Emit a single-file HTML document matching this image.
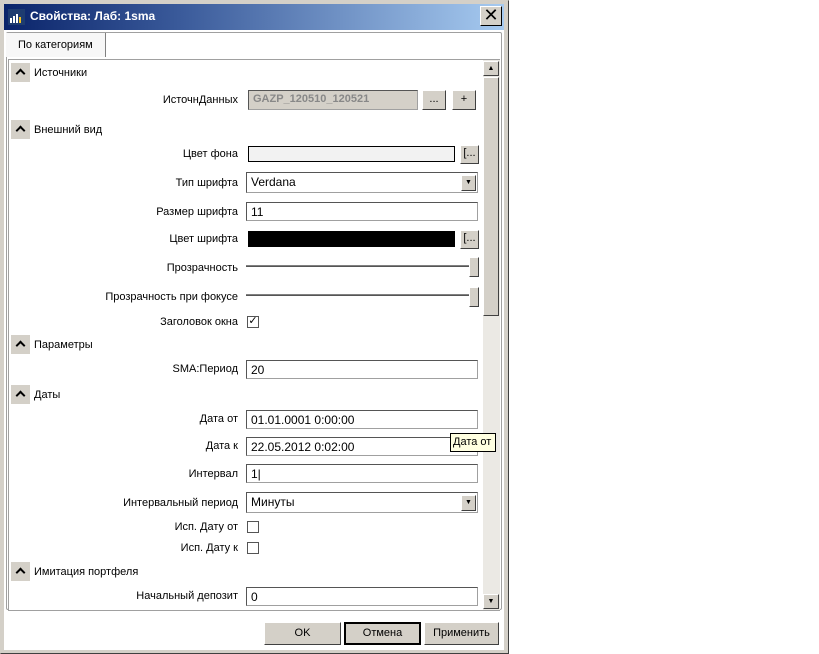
<!DOCTYPE html>
<html><head><meta charset="utf-8"><style>
*{box-sizing:border-box;margin:0;padding:0}
body{width:819px;height:654px;background:#fff;position:relative;overflow:hidden;font-family:"Liberation Sans",sans-serif;font-size:11px;color:#000}
.a{position:absolute}
.frame{left:0;top:0;width:509px;height:654px;background:#d4d0c8;border:1px solid #404040;border-top-color:#d4d0c8;border-left-color:#d4d0c8}
.inner{left:4px;top:30px;width:500px;height:620px;background:#fff}
.title{left:4px;top:4px;width:500px;height:26px;background:linear-gradient(90deg,#0a246a,#3a5a9a 35%,#a6caf0)}
.lbl{position:absolute;right:581px;white-space:nowrap}
.hdr{position:absolute;left:34px;white-space:nowrap}
.cb{position:absolute;left:11px;width:19px;height:19px;background:#d4d0c8}
.cb:after{content:"";position:absolute;left:6px;top:7px;width:5px;height:5px;border-left:2px solid #000;border-top:2px solid #000;transform:rotate(45deg)}
.inp{position:absolute;left:246px;width:232px;height:19px;background:#fff;border:1px solid #a0a0a0;border-top-color:#555;border-left-color:#555;padding:2px 4px;font-size:11px}
.btn{position:absolute;background:#d4d0c8;border:1px solid;border-color:#fff #404040 #404040 #fff;text-align:center;font-size:11px}
.chk{position:absolute;left:247px;width:12px;height:12px;border:1px solid #555;background:#fff}
.sl{position:absolute;left:246px;width:224px;height:2px;border-top:1px solid #808080;border-bottom:1px solid #555}
.th{position:absolute;left:469px;width:10px;height:20px;background:#d4d0c8;border:1px solid;border-color:#fff #404040 #404040 #fff}
</style></head><body>
<div class="a frame"></div>
<div class="a title"></div>
<svg class="a" style="left:8px;top:9px" width="17" height="16"><rect width="17" height="16" fill="#1e3c70"/><rect x="2" y="9" width="2" height="5" fill="#fff"/><rect x="5" y="7" width="2" height="7" fill="#fff"/><rect x="8" y="5" width="2" height="9" fill="#fff"/><rect x="11" y="8" width="2" height="6" fill="#f0c020"/></svg>
<div class="a" style="left:30px;top:9px;color:#fff;font-weight:bold;font-size:12px">Свойства: Лаб: 1sma</div>
<div class="btn" style="left:480px;top:6px;width:22px;height:20px;font-size:18px;line-height:17px;border-color:#fff #000 #000 #fff">✕</div>
<div class="a inner"></div>
<div class="a" style="left:6px;top:32px;width:496px;height:578px;border:1px solid #a0a0a0;border-radius:2px"></div>
<div class="a" style="left:6px;top:33px;width:100px;height:24px;background:#f7f7f7;border-right:1px solid #808080;padding:6px 0 0 12px">По категориям</div>
<div class="a" style="left:8px;top:59px;width:492px;height:552px;border:1px solid #a0a0a0;background:#fff"></div>
<div class="a" style="left:483px;top:60px;width:17px;height:550px;background:#ebe9e4"></div>
<div class="btn" style="left:483px;top:61px;width:16px;height:15px;font-size:7px;line-height:13px">▲</div>
<div class="btn" style="left:483px;top:77px;width:16px;height:239px"></div>
<div class="btn" style="left:483px;top:594px;width:16px;height:15px;font-size:7px;line-height:13px">▼</div>

<div class="cb" style="top:63px"></div><div class="hdr" style="top:67px">Источники</div>
<div class="lbl" style="top:94px">ИсточнДанных</div>
<div class="inp" style="left:248px;top:90px;width:170px;height:20px;background:#d4d0c8;color:#888;font-weight:bold">GAZP_120510_120521</div>
<div class="btn" style="left:422px;top:90px;width:24px;height:20px;line-height:16px">...</div>
<div class="btn" style="left:452px;top:90px;width:24px;height:20px;line-height:16px">+</div>

<div class="cb" style="top:120px"></div><div class="hdr" style="top:124px">Внешний вид</div>
<div class="lbl" style="top:148px">Цвет фона</div>
<div class="inp" style="left:248px;top:146px;width:207px;height:16px;background:#f2f2f2;border:1px solid #000"></div>
<div class="btn" style="left:460px;top:145px;width:19px;height:19px;line-height:15px">[...</div>
<div class="lbl" style="top:177px">Тип шрифта</div>
<div class="inp" style="top:172px;height:21px;font-size:12px">Verdana</div>
<div class="btn" style="left:461px;top:175px;width:15px;height:16px;font-size:7px;line-height:14px">▼</div>
<div class="lbl" style="top:206px">Размер шрифта</div>
<div class="inp" style="top:202px;font-size:12px">11</div>
<div class="lbl" style="top:233px">Цвет шрифта</div>
<div class="a" style="left:248px;top:231px;width:207px;height:16px;background:#000"></div>
<div class="btn" style="left:460px;top:230px;width:19px;height:19px;line-height:15px">[...</div>
<div class="lbl" style="top:262px">Прозрачность</div>
<div class="sl" style="top:265px"></div><div class="th" style="top:257px"></div>
<div class="lbl" style="top:291px">Прозрачность при фокусе</div>
<div class="sl" style="top:294px"></div><div class="th" style="top:287px"></div>
<div class="lbl" style="top:316px">Заголовок окна</div>
<div class="chk" style="top:316px;font-size:11px;line-height:9px;text-align:center">✓</div>

<div class="cb" style="top:335px"></div><div class="hdr" style="top:339px">Параметры</div>
<div class="lbl" style="top:363px">SMA:Период</div>
<div class="inp" style="top:360px;font-size:12px">20</div>

<div class="cb" style="top:385px"></div><div class="hdr" style="top:389px">Даты</div>
<div class="lbl" style="top:413px">Дата от</div>
<div class="inp" style="top:410px;font-size:12px">01.01.0001 0:00:00</div>
<div class="lbl" style="top:440px">Дата к</div>
<div class="inp" style="top:437px;font-size:12px">22.05.2012 0:02:00</div>
<div class="a" style="left:450px;top:433px;width:46px;height:19px;background:#ffffe1;border:1px solid #000;padding:2px 2px;white-space:nowrap">Дата от</div>
<div class="lbl" style="top:468px">Интервал</div>
<div class="inp" style="top:464px;font-size:12px">1|</div>
<div class="lbl" style="top:497px">Интервальный период</div>
<div class="inp" style="top:492px;height:21px;font-size:12px">Минуты</div>
<div class="btn" style="left:461px;top:495px;width:15px;height:16px;font-size:7px;line-height:14px">▼</div>
<div class="lbl" style="top:521px">Исп. Дату от</div><div class="chk" style="top:521px"></div>
<div class="lbl" style="top:542px">Исп. Дату к</div><div class="chk" style="top:542px"></div>

<div class="cb" style="top:562px"></div><div class="hdr" style="top:566px">Имитация портфеля</div>
<div class="lbl" style="top:590px">Начальный депозит</div>
<div class="inp" style="top:587px;font-size:12px">0</div>

<div class="btn" style="left:264px;top:622px;width:77px;height:23px;line-height:21px">OK</div>
<div class="btn" style="left:344px;top:622px;width:77px;height:23px;line-height:19px;border:2px solid #000">Отмена</div>
<div class="btn" style="left:424px;top:622px;width:75px;height:23px;line-height:21px">Применить</div>
</body></html>
